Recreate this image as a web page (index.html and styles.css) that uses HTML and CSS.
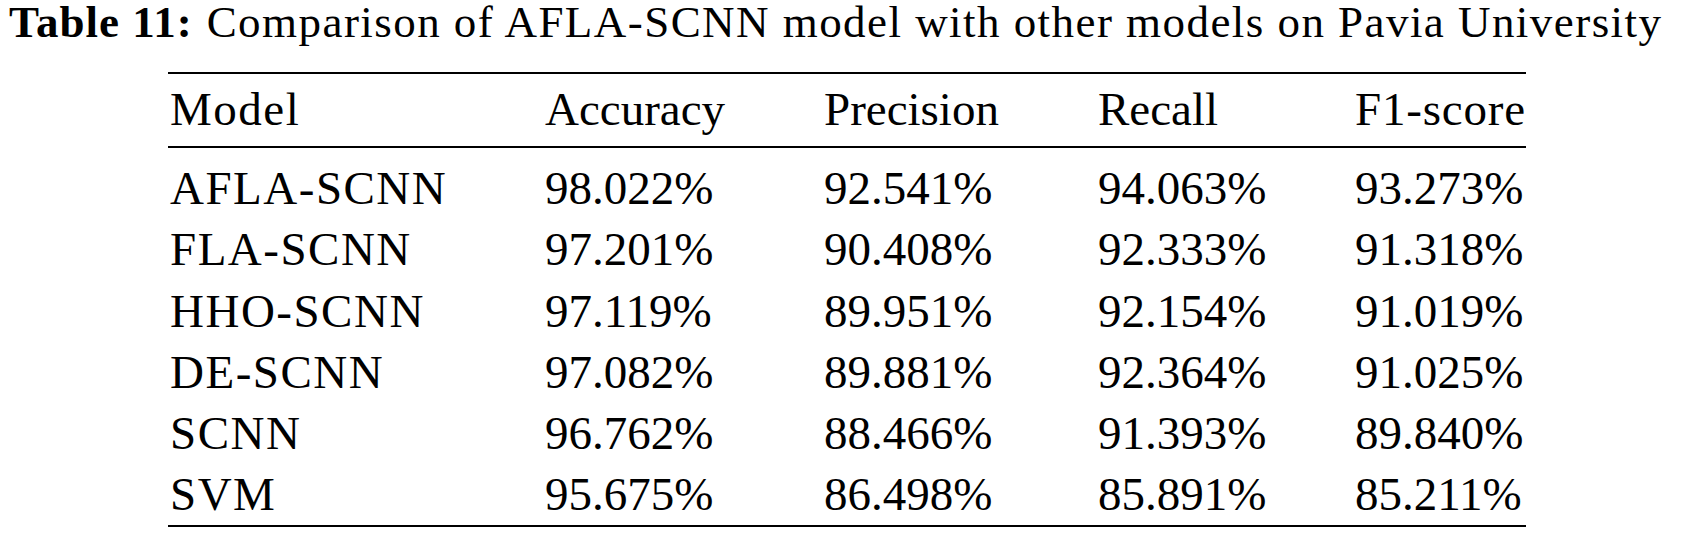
FILE: index.html
```html
<!DOCTYPE html>
<html>
<head>
<meta charset="utf-8">
<link rel="stylesheet" href="styles.css">
</head>
<body>
<div class="caption"><span class="label">Table 11:</span><span class="text">Comparison of AFLA-SCNN model with other models on Pavia University</span></div>
<table class="tbl">
  <colgroup>
    <col class="c1"><col class="c2"><col class="c3"><col class="c4"><col class="c5">
  </colgroup>
  <thead>
    <tr><th class="name">Model</th><th>Accuracy</th><th>Precision</th><th>Recall</th><th class="f1">F1-score</th></tr>
  </thead>
  <tbody>
    <tr class="first"><td class="name">AFLA-SCNN</td><td>98.022%</td><td>92.541%</td><td>94.063%</td><td>93.273%</td></tr>
    <tr><td class="name">FLA-SCNN</td><td>97.201%</td><td>90.408%</td><td>92.333%</td><td>91.318%</td></tr>
    <tr><td class="name">HHO-SCNN</td><td>97.119%</td><td>89.951%</td><td>92.154%</td><td>91.019%</td></tr>
    <tr><td class="name">DE-SCNN</td><td>97.082%</td><td>89.881%</td><td>92.364%</td><td>91.025%</td></tr>
    <tr><td class="name">SCNN</td><td>96.762%</td><td>88.466%</td><td>91.393%</td><td>89.840%</td></tr>
    <tr class="last"><td class="name">SVM</td><td>95.675%</td><td>86.498%</td><td>85.891%</td><td>85.211%</td></tr>
  </tbody>
</table>
</body>
</html>
```
FILE: styles.css
```css
html, body {
  margin: 0;
  padding: 0;
  background: #ffffff;
}
body {
  font-family: "Liberation Serif", "Times New Roman", serif;
  color: #000;
  width: 1683px;
  height: 533px;
  overflow: hidden;
}
.caption {
  font-size: 45px;
  line-height: 45px;
  padding-left: 9px;
  white-space: nowrap;
}
.caption .label {
  font-weight: bold;
  letter-spacing: 1px;
  margin-right: 14px;
}
.caption .text {
  letter-spacing: 1.45px;
}
.tbl {
  margin-left: 168px;
  margin-top: 27px;
  border-collapse: collapse;
  width: 1358px;
  table-layout: fixed;
  font-size: 47px;
}
.c1 { width: 375px; }
.c2 { width: 279px; }
.c3 { width: 274px; }
.c4 { width: 257px; }
.c5 { width: 173px; }
.tbl th, .tbl td {
  font-weight: normal;
  text-align: left;
  padding: 0 0 0 2px;
  line-height: 61.2px;
  white-space: nowrap;
}
.tbl .name {
  letter-spacing: 1.5px;
}
.tbl th.f1 {
  letter-spacing: 0.8px;
}
.tbl thead tr {
  border-top: 2px solid #000;
  border-bottom: 2px solid #000;
}
.tbl th {
  padding-top: 5px;
  padding-bottom: 6px;
}
.tbl tr.first td {
  padding-top: 10px;
}
.tbl tr.last {
  border-bottom: 2px solid #000;
}
.tbl tr.last td {
  padding-bottom: 0;
}
```
